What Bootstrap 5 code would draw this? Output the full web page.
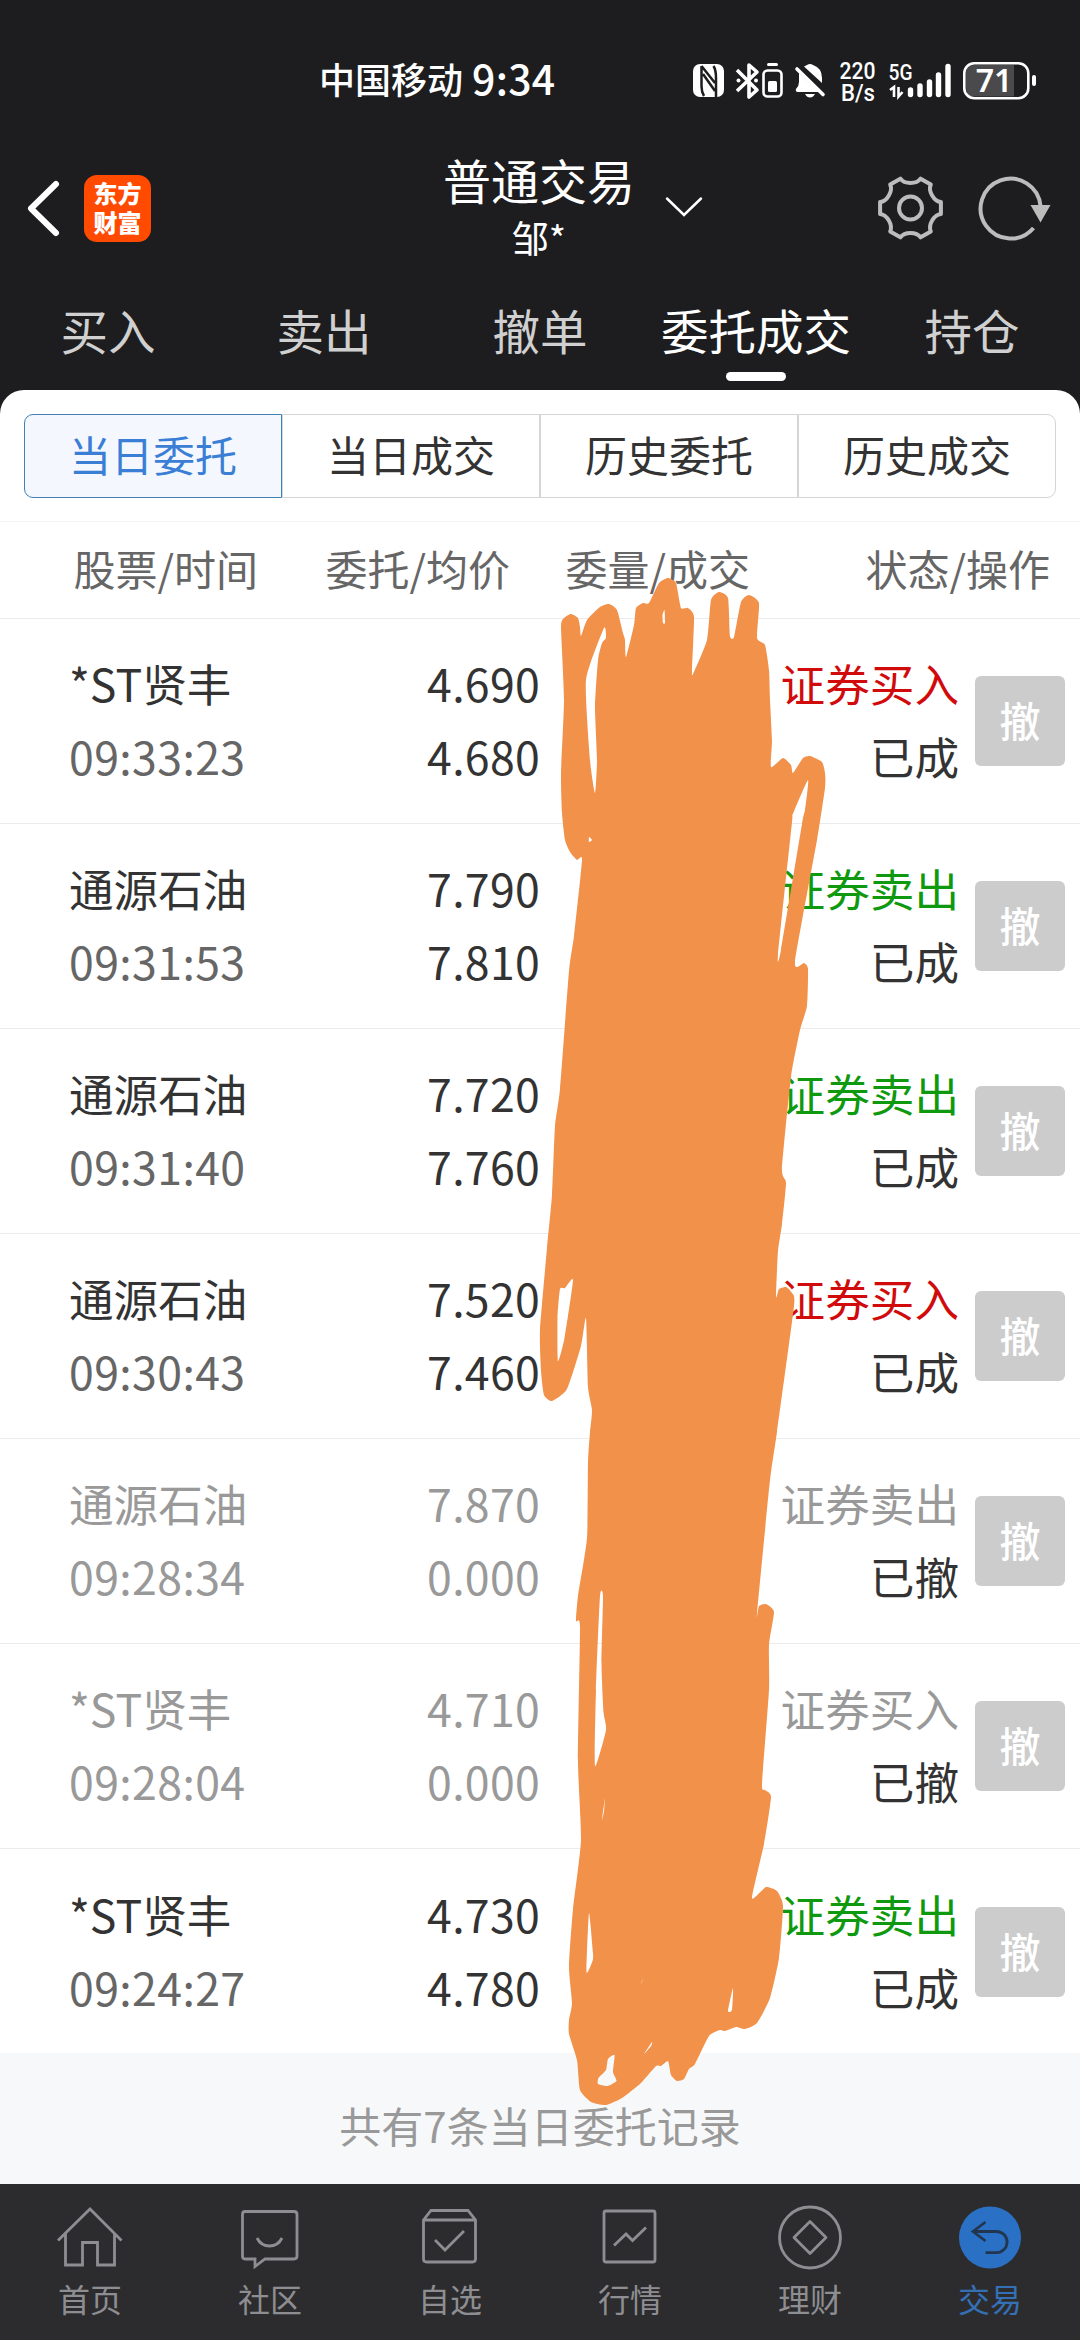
<!DOCTYPE html>
<html lang="zh-CN">
<head>
<meta charset="utf-8">
<meta name="viewport" content="width=device-width, initial-scale=1">
<title>普通交易</title>
<link href="https://cdn.jsdelivr.net/npm/bootstrap@5.3.0/dist/css/bootstrap.min.css" rel="stylesheet">
<style>
  body { font-family: "Noto Sans CJK SC", "Noto Sans", sans-serif; background: #1d1d1f; color: #333; width: 1080px; height: 2340px; overflow: hidden; }
  svg { display: block; overflow: visible; flex-shrink: 0; }
  .topbar { height: 390px; background: #1d1d1f; color: #fff; }
  .statusline { height: 120px; padding: 40px 43px 0 0; }
  .carrier { font-size: 36px; font-weight: 500; line-height: 76px; margin-left: 319px; width: 153px; white-space: nowrap; }
  .clock { font-size: 41px; font-weight: 500; line-height: 74px; width: 221px; letter-spacing: .3px; }
  .titleline { height: 164px; padding-left: 27px; }
  .applogo { width: 67px; height: 67px; border-radius: 13px; background: #ff4a00; margin: 55px 0 0 24px; font-size: 24px; font-weight: 900; line-height: 29px; text-align: center; padding-top: 3px; }
  .main-title { font-size: 48px; line-height: 60px; }
  .sub-title { font-size: 37px; line-height: 57px; }
  .titlebox { width: 216px; margin-left: 280px; margin-right: 2px; text-align: center; padding-top: 29px; }
  .toptabs { height: 106px; }
  .toptab { width: 216px; font-size: 47.500px; line-height: 92px; color: #d0d0d0; text-align: center; }
  .toptab.active { color: #fff; }
  .toptab.active::after { content: ""; display: block; width: 60px; height: 9px; border-radius: 5px; background: #fff; margin: -4px auto 0; }
  .sheet { height: 1663px; background: #fff; border-radius: 24px 24px 0 0; }
  .segs { padding: 24px 24px 0; height: 131px; }
  .seg { width: 258px; height: 84px; border: 1px solid #d5d5d5; border-radius: 0; padding: 0 0 5px; font-size: 42px; line-height: 76px; color: #333; background: #fff; }
  .seg:first-child { border-radius: 9px 0 0 9px; border-color: #4381b4; background: #f4f8fe; color: #3a7fd5; }
  .seg:last-child { border-radius: 0 9px 9px 0; }
  .colheads { height: 98px; border-top: 1px solid #f5f5f5; border-bottom: 1px solid #ebebeb; font-size: 42px; line-height: 91px; color: #666; }
  .colheads div { text-align: right; white-space: nowrap; }
  .c1 { width: 258px; } .c2 { width: 252px; } .c3 { width: 240px; } .c4 { width: 300px; }
  .order { height: 205px; border-bottom: 1px solid #ebebeb; padding: 0 15px 0 69px; font-size: 44.600px; line-height: 73px; color: #333; white-space: nowrap; }
  .order:last-child { border-bottom: 0; }
  .order .lines { margin-top: -4px; }
  .order .nm { width: 220px; }
  .order .pr { width: 251px; text-align: right; letter-spacing: .3px; }
  .order .st { width: 419px; text-align: right; margin-right: 16px; }
  .tm { color: #666; letter-spacing: .4px; }
  .gone .nm, .gone .tm, .gone .pr, .gone .kind { color: #999; }
  .buy { color: #d10a0c; } .sell { color: #0f990f; }
  .cancel { width: 90px; height: 90px; border: 0; border-radius: 6px; background: #ccc; color: #fff; font-size: 41px; font-weight: 500; line-height: 80px; padding: 0 0 4px; }
  .total { height: 131px; background: #f7f8fa; color: #999; font-size: 42px; line-height: 144px; text-align: center; }
  .botnav { height: 156px; background: #2c2c2e; color: #8e8e92; }
  .botnav a { width: 180px; color: inherit; text-decoration: none; font-size: 32px; line-height: 46px; text-align: center; padding-top: 20px; }
  .botnav svg { margin: 0 auto 5px; fill: none; stroke: currentColor; stroke-width: 2.8; }
  .botnav a.active { color: #3470b5; }
  .scribble { position: absolute; left: 0; top: 0; pointer-events: none; }
</style>
</head>
<body class="position-relative">
<header class="topbar">
  <div class="statusline d-flex">
    <div class="carrier">中国移动</div><div class="clock">9:34</div>
    <svg width="344" height="60" viewBox="693 50 344 60" style="margin-top:10px">
      <rect x="693" y="64" width="31" height="33" rx="7" fill="#fff"/>
      <path d="M701.5 66V86Q701.5 92 704 96M701.5 66L715 83M703 74L715 91M716 97V78Q716 70 713.500 66" fill="none" stroke="#1d1d1f" stroke-width="2.500"/>
      <path d="M737 70L757 90L749 97V65L757 72L737 91" fill="none" stroke="#fff" stroke-width="3.600" stroke-linejoin="round"/>
      <circle cx="738.500" cy="80.500" r="2" fill="#fff"/><circle cx="756" cy="80.500" r="2" fill="#fff"/>
      <rect x="763.500" y="70.500" width="18" height="26" rx="4" fill="none" stroke="#fff" stroke-width="2.600"/>
      <rect x="767" y="63" width="11" height="3" rx="1.500" fill="#fff"/><rect x="768" y="81" width="9" height="11" rx="1.500" fill="#fff"/>
      <path d="M807 65Q810 63 813 65Q822 68 822 78V83L804 66.500ZM799 73L819 92H797Q795 91 796 89Q799 86 799 82ZM805 94H815Q813 97.500 810 97.500Q807 97.500 805 94Z" fill="#fff"/>
      <path d="M797 69L823 94.500" stroke="#fff" stroke-width="3.600" stroke-linecap="round"/>
      <g fill="#fff" font-family="Roboto, sans-serif" font-weight="500">
        <text x="839.500" y="79" font-size="23" textLength="36" lengthAdjust="spacingAndGlyphs">220</text>
        <text x="841" y="101" font-size="23" textLength="34" lengthAdjust="spacingAndGlyphs">B/s</text>
        <text x="888.500" y="80" font-size="22" textLength="24" lengthAdjust="spacingAndGlyphs">5G</text>
      </g>
      <path d="M890 90L894 87V97M898.500 87V96.500L902.500 92" fill="none" stroke="#fff" stroke-width="2.600"/>
      <path d="M910.500 90V94.500M920 86V94.500M929.500 82V94.500M938.500 75V94.500M948 66.500V94.500" stroke="#fff" stroke-width="5.400" stroke-linecap="round"/>
      <path d="M974 65H1014V96.500H974Q966 96.500 966 88V73Q966 65 974 65Z" fill="#4a4a4c"/>
      <rect x="964.300" y="63.200" width="64" height="35" rx="10" fill="none" stroke="#fff" stroke-width="2.600"/>
      <rect x="1032" y="75" width="4" height="11" rx="2" fill="#fff"/>
      <text x="994" y="92" font-family="Noto Sans, sans-serif" font-weight="600" font-size="32" fill="#fff" text-anchor="middle">71</text>
    </svg>
  </div>
  <div class="titleline d-flex">
    <svg width="33" height="60" viewBox="27 178 33 60" style="margin-top:58px"><path d="M56 184L31 208.500L56 233" fill="none" stroke="#fff" stroke-width="6" stroke-linecap="round" stroke-linejoin="round"/></svg>
    <div class="applogo"><div>东方</div><div>财富</div></div>
    <div class="titlebox"><div class="main-title">普通交易</div><div class="sub-title">邹*</div></div>
    <svg width="431" height="164" viewBox="649 120 431 164" fill="none">
      <path d="M667 198.500L684 215L701 198.500" stroke="#fff" stroke-width="2.500" stroke-linecap="round"/>
      <g stroke="#bcbcbc" stroke-width="4">
        <g transform="translate(910.500 208)" stroke-linejoin="round">
          <path d="M30.400 5.900C23.400 6.600 17.400 17 20.300 23.400L10.100 29.300C6 23.500-6 23.500-10.100 29.300L-20.300 23.400C-17.400 17-23.400 6.600-30.400 5.900V-5.900C-23.400-6.600-17.400-17-20.300-23.400L-10.100-29.300C-6-23.500 6-23.500 10.100-29.300L20.300-23.400C17.400-17 23.400-6.600 30.400-5.900Z"/>
          <circle r="11.500"/>
        </g>
        <path d="M1033.500 228A30 30 0 1 1 1040.500 206"/>
      </g>
      <path d="M1030.500 205H1050.500L1040.500 222.500Z" fill="#bcbcbc"/>
    </svg>
  </div>
  <nav class="toptabs d-flex">
    <div class="toptab">买入</div><div class="toptab">卖出</div><div class="toptab">撤单</div><div class="toptab active">委托成交</div><div class="toptab">持仓</div>
  </nav>
</header>
<main>
  <section class="sheet">
    <div class="segs d-flex">
      <button class="seg">当日委托</button><button class="seg">当日成交</button><button class="seg">历史委托</button><button class="seg">历史成交</button>
    </div>
    <div class="colheads d-flex"><div class="c1">股票/时间</div><div class="c2">委托/均价</div><div class="c3">委量/成交</div><div class="c4">状态/操作</div></div>
    <div class="orders">
      <div class="order d-flex align-items-center"><div class="lines d-flex"><div class="nm">*ST贤丰<div class="tm">09:33:23</div></div><div class="pr">4.690<br>4.680</div><div class="st"><span class="kind buy">证券买入</span><br>已成</div></div><button class="cancel">撤</button></div>
      <div class="order d-flex align-items-center"><div class="lines d-flex"><div class="nm">通源石油<div class="tm">09:31:53</div></div><div class="pr">7.790<br>7.810</div><div class="st"><span class="kind sell">证券卖出</span><br>已成</div></div><button class="cancel">撤</button></div>
      <div class="order d-flex align-items-center"><div class="lines d-flex"><div class="nm">通源石油<div class="tm">09:31:40</div></div><div class="pr">7.720<br>7.760</div><div class="st"><span class="kind sell">证券卖出</span><br>已成</div></div><button class="cancel">撤</button></div>
      <div class="order d-flex align-items-center"><div class="lines d-flex"><div class="nm">通源石油<div class="tm">09:30:43</div></div><div class="pr">7.520<br>7.460</div><div class="st"><span class="kind buy">证券买入</span><br>已成</div></div><button class="cancel">撤</button></div>
      <div class="order gone d-flex align-items-center"><div class="lines d-flex"><div class="nm">通源石油<div class="tm">09:28:34</div></div><div class="pr">7.870<br>0.000</div><div class="st"><span class="kind">证券卖出</span><br>已撤</div></div><button class="cancel">撤</button></div>
      <div class="order gone d-flex align-items-center"><div class="lines d-flex"><div class="nm">*ST贤丰<div class="tm">09:28:04</div></div><div class="pr">4.710<br>0.000</div><div class="st"><span class="kind">证券买入</span><br>已撤</div></div><button class="cancel">撤</button></div>
      <div class="order d-flex align-items-center"><div class="lines d-flex"><div class="nm">*ST贤丰<div class="tm">09:24:27</div></div><div class="pr">4.730<br>4.780</div><div class="st"><span class="kind sell">证券卖出</span><br>已成</div></div><button class="cancel">撤</button></div>
    </div>
  </section>
  <div class="total">共有7条当日委托记录</div>
</main>
<footer class="botnav d-flex">
  <a href="#"><svg width="66" height="66" viewBox="57 2204 66 66"><path d="M58 2240.500L90 2209L121.500 2240.500M65.500 2234V2265H82.500V2242.500H97.500V2265H114.500V2234"/></svg>首页</a>
  <a href="#"><svg width="66" height="66" viewBox="237 2204 66 66"><path d="M245 2211.500H294Q297 2211.500 297 2214.500V2256Q297 2259 294 2259H265L255 2266.500V2259H245Q242.500 2259 242.500 2256V2214.500Q242.500 2211.500 245 2211.500ZM257 2238Q261 2246 269.500 2246Q278 2246 282 2238"/></svg>社区</a>
  <a href="#"><svg width="66" height="66" viewBox="417 2204 66 66"><path d="M423.500 2220L431 2210.500H468L475.500 2220V2259Q475.500 2262 472.500 2262H426.500Q423.500 2262 423.500 2259ZM423.500 2220H475.500M435 2240L445 2250L464 2231"/></svg>自选</a>
  <a href="#"><svg width="66" height="66" viewBox="597 2204 66 66"><rect x="604" y="2211" width="51" height="51" rx="2"/><path d="M614 2245.500L626 2234L632.500 2240.500L646 2227.500"/></svg>行情</a>
  <a href="#"><svg width="66" height="66" viewBox="776.500 2204 66 66"><circle cx="809.500" cy="2237.500" r="30.500"/><path d="M809.500 2221.500L825.500 2237.500L809.500 2253.500L793.500 2237.500Z" stroke-linejoin="round"/></svg>理财</a>
  <a href="#" class="active"><svg width="66" height="66" viewBox="956.500 2204 66 66"><circle cx="989.500" cy="2237.500" r="31" fill="#2a71c5" stroke="none"/><path d="M985 2222L972.500 2231.500L985 2241M973 2231.500H996A10.500 10.500 0 0 1 996 2252.700H985" stroke="#22364f"/></svg>交易</a>
</footer>
<svg class="scribble" width="1080" height="2340" viewBox="0 0 1080 2340"><path id="ink" fill="#f2914a" fill-rule="evenodd"/></svg>
<script>
// Marker outline first, then the gaps left between its strokes.
const loops = [
"561,627 564,618 571,614 578,618 580,627 581,636 587,620 600,607 609,604 617,610 623,633 625,640 626,657 634,625 636,608 643,603 649,603 659,583 668,578 676,583 681,608 688,608 694,617 692,670 693,674 707,640 711,600 719,592 728,598 730,636 734,637 741,602 749,595 759,603 757,638 765,645 769,670 770,700 772,740 771,767 783,758 791,765 793,773 803,758 810,756 822,762 825,773 825,788 817,840 795,962 804,963 808,969 807,1006 800,1030 791,1077 782,1169 786,1183 782,1224 778,1251 776,1297 779,1289 786,1287 792,1293 794,1306 777,1432 770,1480 757,1614 759,1606 766,1604 774,1612 769,1645 769,1690 762,1784 765,1790 771,1797 764,1844 752,1898 766,1887 777,1891 783,1906 779,1958 770,1998 757,2023 745,2029 736,2027 725,2031 720,2030 709,2036 695,2064 689,2069 684,2079 677,2081 671,2075 668,2061 661,2066 656,2066 641,2083 622,2098 606,2105 591,2102 580,2090 577,2060 569,2034 569,2020 572,2003 569,1967 573,1909 581,1840 578,1761 580,1627 576,1621 578,1596 587,1538 588,1462 590,1432 592,1410 588,1387 586,1318 581,1346 567,1389 552,1401 544,1395 541,1371 540,1330 547,1248 552,1195 555,1126 560,1089 569,971 574,936 582,860 577,860 570,852 565,840 562,813 561,773 564,700",
"604,628 606,638 602,643 598,660 595,707 597,760 595,793 590,760 586,680",
"664.500,610 662.500,615 663,623 665,623",
"808,780 792.500,815 792,822 778,955 781,950 802,824 805,810",
"560,1289 565,1288 573,1280 564.500,1338 558,1361 557.500,1318",
"600,1596 603,1596 601.500,1663 603.500,1712 606,1730 595,1766 596,1690",
"589,1913 593,1953 592.500,1961 586.500,1972",
"614.500,2055 608,2059 606,2070 598.500,2078 598,2084 607.500,2086 616.500,2081 613,2072",
"733,1988 728,2011 732,2010",
"652,2042 644,2054 651,2046",
"605,1798 602,1820 604,1811",
"643,1978 641,1984 642,1982",
"589,837 589,842 592,840"
];
document.getElementById("ink").setAttribute("d", loops.map(s => {
  const p = s.split(" ").map(q => q.split(",").map(Number)), n = p.length, k = 0.09;
  let d = "M" + p[0];
  for (let i = 0; i < n; i++) {
    const a = p[(i + n - 1) % n], b = p[i], c = p[(i + 1) % n], e = p[(i + 2) % n];
    d += `C${b[0] + (c[0] - a[0]) * k} ${b[1] + (c[1] - a[1]) * k} ${c[0] - (e[0] - b[0]) * k} ${c[1] - (e[1] - b[1]) * k} ${c[0]} ${c[1]}`;
  }
  return d + "Z";
}).join(""));
</script>
<script src="https://cdn.jsdelivr.net/npm/bootstrap@5.3.0/dist/js/bootstrap.bundle.min.js"></script>
</body>
</html>
